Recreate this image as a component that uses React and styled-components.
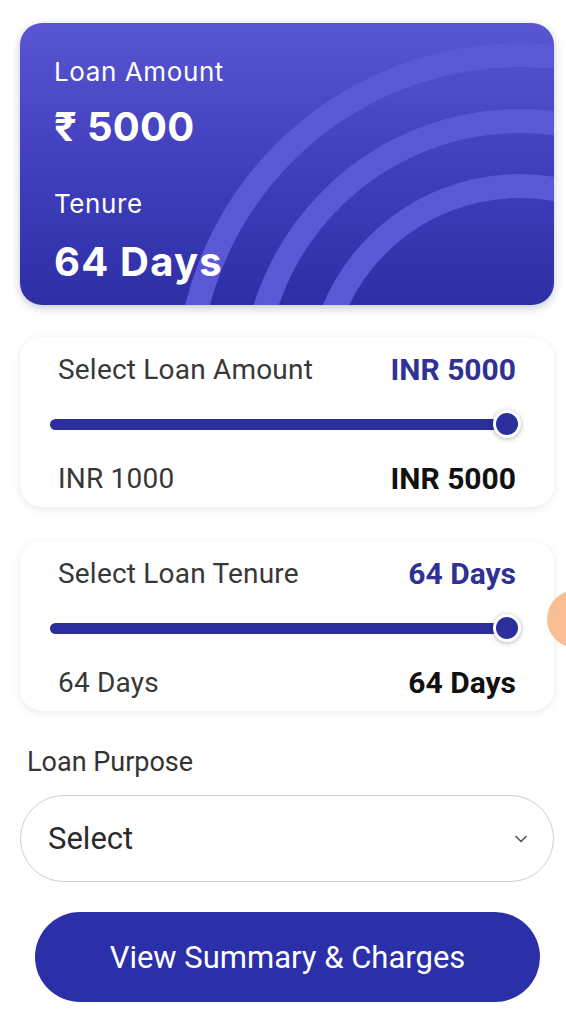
import React from "react";
import styled, { createGlobalStyle } from "styled-components";
import { ChevronDown } from "lucide-react";

const GlobalStyle = createGlobalStyle`
  * { box-sizing: border-box; }
  body {
    margin: 0;
    background: #fff;
    font-family: Roboto, "Noto Sans", sans-serif;
  }
`;

const Page = styled.div`
  position: relative;
  width: 566px;
  height: 1024px;
  overflow: hidden;
  padding: 23px 12px 0 20px;
  display: flex;
  flex-direction: column;
`;

const Hero = styled.div`
  position: relative;
  flex-shrink: 0;
  height: 282px;
  border-radius: 22px;
  overflow: hidden;
  background: linear-gradient(180deg, #5856d1 0%, #4341bf 45%, #2d2fa5 100%);
  box-shadow: 0 3px 8px rgba(40, 40, 120, 0.25);
  padding: 34px 34px 0;
  color: #fff;
  font-family: Inter, "Noto Sans", sans-serif;
`;

const Rings = styled.svg`
  position: absolute;
  inset: 0;
`;

const HeroLabel = styled.div`
  position: relative;
  font-size: 26px;
  font-weight: 400;
  letter-spacing: 0.6px;
  line-height: 30px;
  margin-top: ${(p) => p.$top || 0}px;
`;

const HeroValue = styled.div`
  position: relative;
  font-size: 40px;
  font-weight: 700;
  letter-spacing: ${(p) => p.$spread || 0.3}px;
  line-height: 44px;
  margin-top: ${(p) => p.$top || 0}px;
`;

const Card = styled.div`
  flex-shrink: 0;
  margin-top: ${(p) => p.$top}px;
  height: 170px;
  border-radius: 22px;
  background: #fff;
  box-shadow: 0 2px 8px rgba(0, 0, 0, 0.09);
  padding: 0 38px;
  display: flex;
  flex-direction: column;
`;

const Row = styled.div`
  display: flex;
  justify-content: space-between;
  align-items: center;
  height: 32px;
  margin-top: ${(p) => p.$top}px;
`;

const Label = styled.span`
  font-size: 28px;
  letter-spacing: 0.2px;
  color: #383838;
`;

const Value = styled.span`
  font-size: 30px;
  font-weight: 700;
  color: ${(p) => (p.$accent ? "#2f3294" : "#111")};
`;

const Slider = styled.div`
  position: relative;
  height: 32px;
  margin: 23px -5px 0 -8px;
  display: flex;
  align-items: center;
`;

const Track = styled.div`
  height: 11px;
  border-radius: 6px;
  background: #2c2e9c;
  flex: 1;
  margin-right: 13px;
`;

const Thumb = styled.div`
  position: absolute;
  right: 0;
  top: 50%;
  width: 28px;
  height: 28px;
  margin-top: -14px;
  border-radius: 50%;
  background: #2c2e9c;
  border: 3px solid #fff;
  box-shadow: 0 1px 5px rgba(0, 0, 0, 0.3);
`;

const FieldLabel = styled.div`
  margin: 36px 0 0 7px;
  font-size: 27px;
  line-height: 30px;
  color: #333;
`;

const SelectBox = styled.div`
  flex-shrink: 0;
  margin-top: 18px;
  height: 87px;
  border: 1.5px solid #cfcfcf;
  border-radius: 44px;
  display: flex;
  align-items: center;
  justify-content: space-between;
  padding: 0 22px 0 27px;
  font-size: 31px;
  color: #2a2a2a;
`;

const Button = styled.button`
  flex-shrink: 0;
  margin: 30px 14px 0 15px;
  height: 90px;
  border: none;
  border-radius: 45px;
  background: #2b2fa8;
  color: #fff;
  font-family: Roboto, "Noto Sans", sans-serif;
  font-size: 31px;
`;

const Fab = styled.div`
  position: absolute;
  left: 547px;
  top: 590px;
  width: 58px;
  height: 58px;
  border-radius: 50%;
  background: #f8b886;
  opacity: 0.9;
`;

const SliderCard = ({ top, title, current, min, max }) => (
  <Card $top={top}>
    <Row $top={16}>
      <Label>{title}</Label>
      <Value $accent>{current}</Value>
    </Row>
    <Slider>
      <Track />
      <Thumb />
    </Slider>
    <Row $top={22}>
      <Label>{min}</Label>
      <Value>{max}</Value>
    </Row>
  </Card>
);

const App = () => {
  return (
    <Page>
      <GlobalStyle />
      <Hero>
        <Rings viewBox="0 0 534 282" width="534" height="282">
          {[202, 267, 333].map((r) => (
            <circle key={r} cx="500" cy="365" r={r} fill="none" stroke="#5a58d4" strokeWidth="24" />
          ))}
        </Rings>
        <HeroLabel>Loan Amount</HeroLabel>
        <HeroValue $top={18}>₹ 5000</HeroValue>
        <HeroLabel $top={40}>Tenure</HeroLabel>
        <HeroValue $top={21} $spread={1.2}>64 Days</HeroValue>
      </Hero>

      <SliderCard top={32} title="Select Loan Amount" current="INR 5000" min="INR 1000" max="INR 5000" />
      <SliderCard top={34} title="Select Loan Tenure" current="64 Days" min="64 Days" max="64 Days" />

      <FieldLabel>Loan Purpose</FieldLabel>
      <SelectBox>
        Select
        <ChevronDown size={20} color="#555" strokeWidth={2} />
      </SelectBox>
      <Button>View Summary &amp; Charges</Button>
      <Fab />
    </Page>
  );
};

export default App;
